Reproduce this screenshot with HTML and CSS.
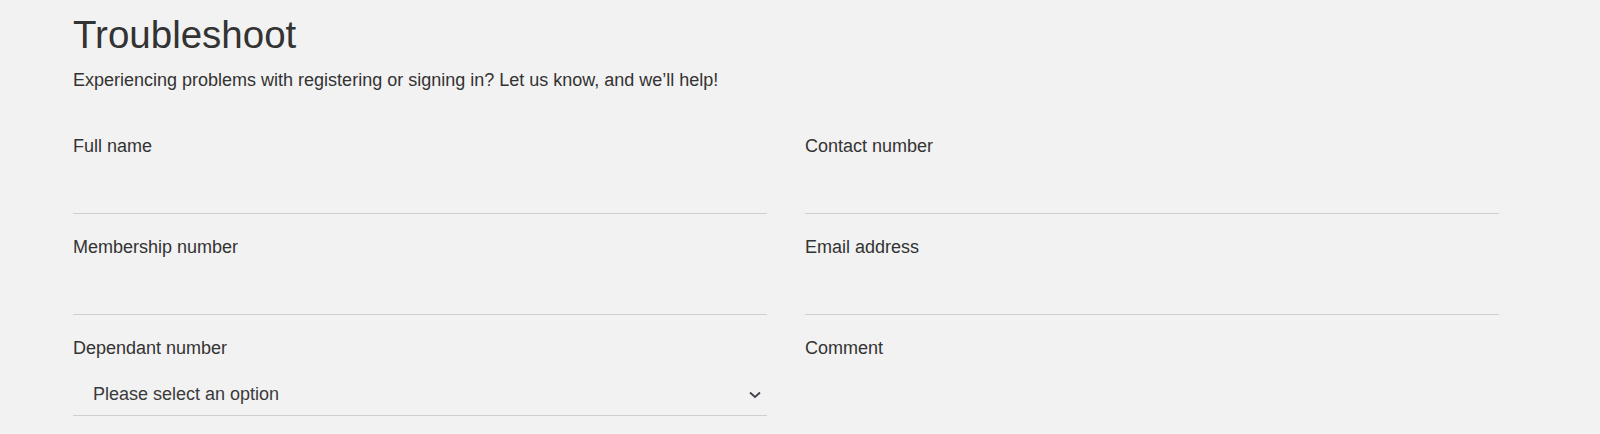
FILE: index.html
```html
<!DOCTYPE html>
<html lang="en">
<head>
  <meta charset="UTF-8">
  <title>Troubleshoot</title>
  <meta name="viewport" content="width=device-width, initial-scale=1.0">
  <link rel="stylesheet" href="styles.css">
</head>
<body>
  <div id="page">
    <h1 class="title">Troubleshoot</h1>
    <p class="intro">Experiencing problems with registering or signing in? Let us know, and we’ll help!</p>

    <form class="form-grid">
      <div class="field">
        <label class="field-label" for="full-name">Full name</label>
        <input class="field-input" id="full-name" type="text">
      </div>
      <div class="field">
        <label class="field-label" for="contact">Contact number</label>
        <input class="field-input" id="contact" type="text">
      </div>
      <div class="field">
        <label class="field-label" for="membership">Membership number</label>
        <input class="field-input" id="membership" type="text">
      </div>
      <div class="field">
        <label class="field-label" for="email">Email address</label>
        <input class="field-input" id="email" type="email">
      </div>
      <div class="field">
        <label class="field-label" for="dependant">Dependant number</label>
        <div class="field-select" id="dependant">
          <span>Please select an option</span>
          <svg class="chevron" width="12" height="8" viewBox="0 0 12 8">
            <path d="M1 1.5 L6 6 L11 1.5" fill="none" stroke="#3d4148" stroke-width="1.8"/>
          </svg>
        </div>
      </div>
      <div class="field">
        <label class="field-label" for="comment">Comment</label>
        <textarea class="field-textarea" id="comment"></textarea>
      </div>
    </form>
  </div>
</body>
</html>
```

FILE: styles.css
```css
html, body {
  margin: 0;
  padding: 0;
  background: #f2f2f2;
  font-family: "Liberation Sans", Arial, sans-serif;
  color: #333;
  overflow: hidden;
}
#page {
  width: 1426px;
  padding: 12px 0 0 73px;
}
.title {
  font-size: 38.5px;
  font-weight: normal;
  line-height: 46px;
  margin: 0;
}
.intro {
  font-size: 18px;
  line-height: 22px;
  margin: 11px 0 0 0;
}
.form-grid {
  display: grid;
  grid-template-columns: 1fr 1fr;
  column-gap: 38px;
  row-gap: 22px;
  margin-top: 44px;
}
.field {
  display: flex;
  flex-direction: column;
}
.field-label {
  font-size: 18px;
  line-height: 22px;
}
.field-input {
  height: 57px;
  border: none;
  border-bottom: 1px solid #cfcfcf;
  background: transparent;
  box-sizing: border-box;
  padding: 14px 20px 0;
  font: inherit;
  outline: none;
}
.field-select {
  height: 57px;
  box-sizing: border-box;
  border-bottom: 1px solid #cfcfcf;
  padding: 14px 6px 0 20px;
  display: flex;
  align-items: center;
  justify-content: space-between;
  font-size: 18px;
  color: #3a3a3a;
}
.chevron {
  margin-top: 2px;
}
.field-textarea {
  height: 120px;
  border: none;
  background: transparent;
  resize: none;
  font: inherit;
  outline: none;
}
```
